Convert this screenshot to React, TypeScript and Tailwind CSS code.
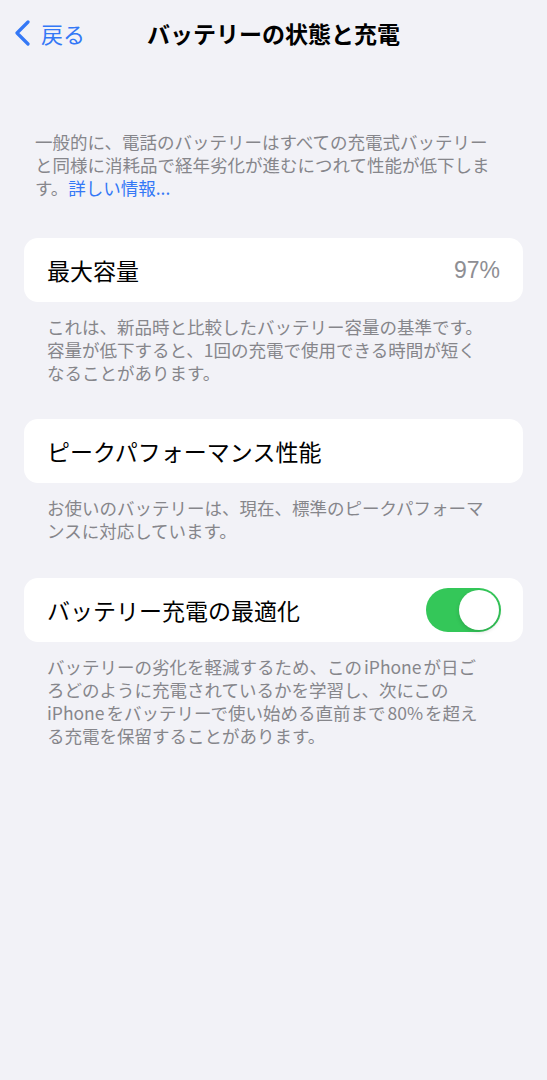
import React from 'react';

const font = { fontFamily: '"Noto Sans CJK JP", "Noto Sans", sans-serif' };

const Footer = ({ children }: { children: React.ReactNode }) => (
  <p className="px-[47px] pt-[13px] text-[17.5px] leading-[23px] text-[#86868b] whitespace-nowrap">
    {children}
  </p>
);

// Latin words get a little air around them, like iOS does in Japanese text
const Latin = ({ children }: { children: React.ReactNode }) => (
  <span className="mx-[2px]">{children}</span>
);

const Toggle = ({ on }: { on: boolean }) => (
  <div
    className={`w-[75px] h-[44px] rounded-full p-[2px] flex ${
      on ? 'bg-[#34c759] justify-end' : 'bg-[#e5e5ea] justify-start'
    }`}
  >
    <div className="w-[40px] h-[40px] rounded-full bg-white shadow-[0_2px_4px_rgba(0,0,0,0.15)]" />
  </div>
);

export default function App() {
  return (
    <div className="min-h-screen bg-[#f2f2f7] text-black pb-10" style={font}>
      {/* Nav bar */}
      <div className="h-[66px] grid grid-cols-[1fr_auto_1fr] items-center">
        <button className="flex items-center gap-[10px] pl-[14px] text-[#3478f6] text-[22px]">
          <svg width="17" height="26" viewBox="0 0 17 26" fill="none">
            <path d="M14 2 L3 13 L14 24" stroke="currentColor" strokeWidth="3.2" strokeLinecap="round" strokeLinejoin="round" />
          </svg>
          <span className="leading-none">戻る</span>
        </button>
        <h1 className="text-[23px] font-bold">バッテリーの状態と充電</h1>
        <div />
      </div>

      {/* Intro */}
      <p className="mt-[64px] px-[35px] text-[17.5px] leading-[23px] text-[#86868b] whitespace-nowrap">
        一般的に、電話のバッテリーはすべての充電式バッテリー
        <br />
        と同様に消耗品で経年劣化が進むにつれて性能が低下しま
        <br />
        す。<span className="text-[#3478f6]">詳しい情報...</span>
      </p>

      {/* Max capacity */}
      <div className="mt-[39px] mx-6 h-[64px] bg-white rounded-[14px] flex items-center justify-between pl-[23px] pr-[23px]">
        <span className="text-[23px]">最大容量</span>
        <span className="text-[23px] text-[#8e8e93]" style={{ fontFamily: '"Liberation Sans", "Noto Sans", sans-serif' }}>
          97%
        </span>
      </div>
      <Footer>
        これは、新品時と比較したバッテリー容量の基準です。
        <br />
        容量が低下すると、1回の充電で使用できる時間が短く
        <br />
        なることがあります。
      </Footer>

      {/* Peak performance */}
      <div className="mt-[35px] mx-6 h-[64px] bg-white rounded-[14px] flex items-center pl-[23px]">
        <span className="text-[23px]">ピークパフォーマンス性能</span>
      </div>
      <Footer>
        お使いのバッテリーは、現在、標準のピークパフォーマ
        <br />
        ンスに対応しています。
      </Footer>

      {/* Optimized charging */}
      <div className="mt-[36px] mx-6 h-[64px] bg-white rounded-[14px] flex items-center justify-between pl-[23px] pr-[22px]">
        <span className="text-[23px]">バッテリー充電の最適化</span>
        <Toggle on />
      </div>
      <Footer>
        バッテリーの劣化を軽減するため、この<Latin>iPhone</Latin>が日ご
        <br />
        ろどのように充電されているかを学習し、次にこの
        <br />
        <span className="mr-[2px]">iPhone</span>をバッテリーで使い始める直前まで<Latin>80%</Latin>を超え
        <br />
        る充電を保留することがあります。
      </Footer>
    </div>
  );
}
